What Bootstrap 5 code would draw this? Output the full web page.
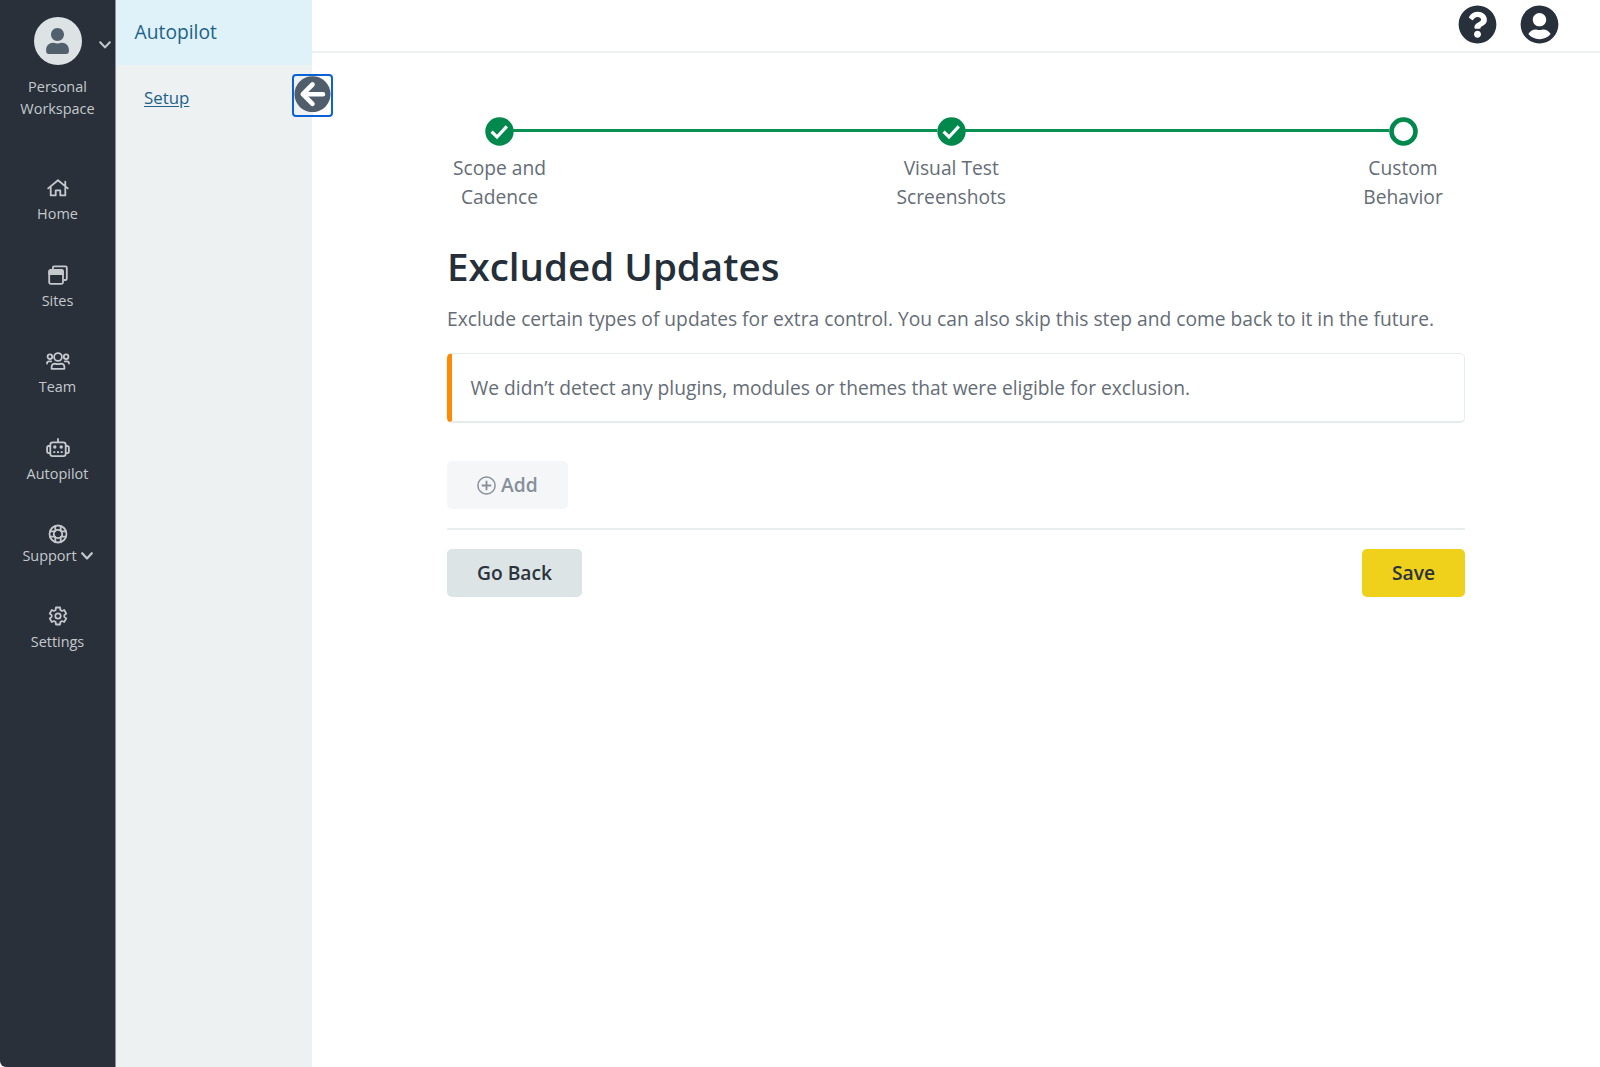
<!DOCTYPE html>
<html lang="en">
<head>
<meta charset="utf-8">
<meta name="viewport" content="width=device-width, initial-scale=1">
<title>Autopilot Setup</title>
<link href="https://cdn.jsdelivr.net/npm/bootstrap@5.3.0/dist/css/bootstrap.min.css" rel="stylesheet">
<style>
  body { font-family: "Open Sans", "Noto Sans", sans-serif; font-size: 19.23px; line-height: 28.9px; color: #656d76; background: #fff; overflow: hidden; }
  .side-nav { width: 116px; background: #29303a; border-right: 1px solid #8b9197; border-bottom-left-radius: 6px; color: #c5c9cd; font-size: 14.45px; line-height: 20px; }
  .side-nav a { color: inherit; }
  .workspace { height: 178px; padding-top: 17.4px; line-height: 21.4px; }
  .avatar { width: 48px; height: 48px; background: #dde3e5; color: #525f6d; }
  .workspace-caret { right: 4px; top: 41px; }
  .workspace-name { margin-top: 11px; }
  .side-item { height: 86.6px; gap: 6.2px; }
  .side-item.tight { height: 81.6px; gap: 1.5px; }
  .ico { fill: none; stroke: currentColor; stroke-width: 1.8; stroke-linecap: round; stroke-linejoin: round; }
  .sub-nav { width: 196px; background: #edf1f2; }
  .sub-nav a { color: #1c6187; }
  .sub-title { height: 65px; padding: 3px 19px 4px 18.6px; background: #dff2f9; }
  .sub-link { margin: 19px 0 0 28px; font-size: 16.86px; text-underline-offset: 2px; }
  .collapse-btn { top: 74px; right: -21px; width: 41px; height: 43px; border: 2px solid #0b61d6; border-radius: 4px; background: linear-gradient(90deg, #edf1f2 50%, #fff 50%); z-index: 2; }
  .top-bar { height: 53px; border-bottom: 2px solid #edf1f3; padding: 0 41px 2px 0; gap: 23.5px; color: #28313b; }
  .page-body { margin-left: 135px; width: 1018px; padding-top: 64px; }
  .steps { padding-right: 9.5px; }
  .step { width: 105px; }
  .step + .step::before { content: ""; position: absolute; height: 3px; top: 12px; right: calc(50% + 14px); width: 424px; background: #0b9053; }
  .step-label { margin-top: 8px; }
  h1 { font-size: 38.54px; font-weight: 600; line-height: 48px; color: #252f39; margin: 30px 0 15px; }
  .notice { border: 1px solid #e6ecee; border-bottom-width: 2px; border-left: 5px solid #ff8a00; border-radius: 5px; height: 70px; padding: 2px 19px 0 18.5px; margin-top: 19px; }
  .btn { font-size: 19.23px; font-weight: 600; line-height: 28.9px; border: 0; border-radius: 5px; height: 48px; padding: 2px 30px 0; }
  .btn-add, .btn-add:disabled { background: #f4f6f8; color: #87909a; opacity: 1; margin-top: 38px; gap: 5px; }
  .btn-back { background: #dce4e5; color: #2b333c; }
  .btn-save { background: #efd11c; color: #2b333c; }
  .rule { height: 2px; background: #e8edef; margin: 19px 0; }
</style>
<script src="https://cdn.jsdelivr.net/npm/bootstrap@5.3.0/dist/js/bootstrap.bundle.min.js"></script>
</head>
<body>
<div class="d-flex vh-100">
  <nav class="side-nav flex-shrink-0 text-center">
    <div class="workspace position-relative d-flex flex-column align-items-center">
      <div class="avatar rounded-circle d-flex align-items-center justify-content-center">
        <svg width="23" height="26" viewBox="0 0 448 512" fill="currentColor"><path d="M224 256c70.7 0 128-57.3 128-128S294.7 0 224 0 96 57.3 96 128s57.3 128 128 128zm89.6 32h-16.7c-22.2 10.2-46.9 16-72.9 16s-50.6-5.8-72.9-16h-16.7C60.2 288 0 348.2 0 422.4V464c0 26.5 21.5 48 48 48h352c26.5 0 48-21.5 48-48v-41.6c0-74.2-60.2-134.4-134.4-134.4z"/></svg>
      </div>
      <svg class="ico workspace-caret position-absolute d-block" width="12" height="8" viewBox="0 0 12 8"><path stroke-width="2" d="M1.2 1.2 6 6.4l4.8-5.2"/></svg>
      <div class="workspace-name">Personal<br>Workspace</div>
    </div>
    <a href="#" class="side-item d-flex flex-column align-items-center text-decoration-none">
      <svg class="ico flex-shrink-0" width="22" height="20" viewBox="0 0 22 20"><path d="M1.2 10.4 11 2.2l9.8 8.2M3.7 9v8.4h5v-5.1h4.6v5.1h5V9M18.3 8V3.7"/></svg>
      <span>Home</span>
    </a>
    <a href="#" class="side-item d-flex flex-column align-items-center text-decoration-none">
      <svg class="ico flex-shrink-0" width="20" height="20" viewBox="0 0 20 20"><rect x="1.2" y="5" width="13.8" height="13.8" rx="1.5"/><path fill="currentColor" d="M1.2 9V6.3L2.3 5h11.5L15 6.3V9z"/><path d="M4.9 4V2.4q0-1.1 1.1-1.1h11.6q1.2 0 1.2 1.1v11.4q0 1.2-1.2 1.2h-1"/></svg>
      <span>Sites</span>
    </a>
    <a href="#" class="side-item d-flex flex-column align-items-center text-decoration-none">
      <svg class="ico flex-shrink-0" width="24" height="20" viewBox="0 0 24 20"><circle cx="12" cy="6" r="3.9"/><circle cx="3.9" cy="5.7" r="2.3"/><circle cx="20.1" cy="5.7" r="2.3"/><path d="M5.6 17.8v-1.6q0-3.5 3.3-3.6 3.1 1 6.2 0 3.3.1 3.3 3.6v1.6zM1 12.6q0-2.2 2-2.2h2.2M23 12.6q0-2.2-2-2.2h-2.2"/></svg>
      <span>Team</span>
    </a>
    <a href="#" class="side-item d-flex flex-column align-items-center text-decoration-none">
      <svg class="ico flex-shrink-0" width="24" height="20" viewBox="0 0 24 20"><rect x="4.3" y="4.4" width="15.4" height="13.8" rx="2.4"/><path d="M12 .9v3.3M4 8H2.6Q1.1 8 1.1 9.6v4q0 1.6 1.5 1.6H4M20 8h1.4q1.5 0 1.5 1.6v4q0 1.6-1.5 1.6H20"/><g fill="currentColor" stroke="none"><circle cx="8.8" cy="9" r="1.7"/><circle cx="15.2" cy="9" r="1.7"/><path d="M7.3 13.3h2v1.8h-2zM11 13.3h2v1.8h-2zM14.7 13.3h2v1.8h-2z"/></g></svg>
      <span>Autopilot</span>
    </a>
    <a href="#" class="side-item tight d-flex flex-column align-items-center text-decoration-none">
      <svg class="ico flex-shrink-0" width="20" height="20" viewBox="0 0 20 20"><circle cx="10" cy="10" r="8.5"/><circle cx="10" cy="10" r="4.2"/><path d="M7.3 2v5M12.7 2v5M7.3 13v5M12.7 13v5M2 7.3h5M2 12.7h5M13 7.3h5M13 12.7h5"/></svg>
      <span class="d-flex align-items-center justify-content-center gap-1">Support
        <svg class="ico" width="12" height="8" viewBox="0 0 12 8"><path stroke-width="2.2" d="M1.2 1.2 6 6.4l4.8-5.2"/></svg>
      </span>
    </a>
    <a href="#" class="side-item d-flex flex-column align-items-center text-decoration-none">
      <svg class="ico flex-shrink-0" width="20" height="20" viewBox="-10 -10 20 20"><path d="M-2.4-5.93-2.08-8.5H2.08L2.4-5.93 3.94-5.04 6.18-5.97 8.26-2.37 6.34-.89V.89L8.26 2.37 6.18 5.97 3.94 5.04 2.4 5.93 2.08 8.5H-2.08L-2.4 5.93-3.94 5.04-6.18 5.97-8.26 2.37-6.34.89V-.89L-8.26-2.37-6.18-5.97-3.94-5.04z"/><circle r="2.7"/></svg>
      <span>Settings</span>
    </a>
  </nav>

  <aside class="sub-nav position-relative flex-shrink-0">
    <div class="sub-title d-flex align-items-center"><a href="#" class="text-decoration-none">Autopilot</a></div>
    <div class="sub-link"><a href="#">Setup</a></div>
    <button class="collapse-btn position-absolute p-0 d-flex align-items-center justify-content-center" aria-label="Collapse menu">
      <svg class="flex-shrink-0 mb-1" width="37" height="37" viewBox="0 0 37 37"><circle cx="18.5" cy="19.2" r="18" fill="#505d6a"/><path d="M29 19.2H9.5M18.5 9.5 8.8 19.2l9.7 9.7" fill="none" stroke="#fff" stroke-width="4.6" stroke-linecap="round" stroke-linejoin="round"/></svg>
    </button>
  </aside>

  <div class="flex-grow-1">
    <header class="top-bar d-flex justify-content-end align-items-center">
      <svg width="39" height="39" viewBox="0 0 512 512" fill="currentColor"><path d="M504 256c0 136.997-111.043 248-248 248S8 392.997 8 256C8 119.083 119.043 8 256 8s248 111.083 248 248zM262.655 90c-54.497 0-89.255 22.957-116.549 63.758-3.536 5.286-2.353 12.415 2.715 16.258l34.699 26.31c5.205 3.947 12.621 3.008 16.665-2.122 17.864-22.658 30.113-35.797 57.303-35.797 20.429 0 45.698 13.148 45.698 32.958 0 14.976-12.363 22.667-32.534 33.976C247.128 238.528 216 254.941 216 296v4c0 6.627 5.373 12 12 12h56c6.627 0 12-5.373 12-12v-1.333c0-28.462 83.186-29.647 83.186-106.667 0-58.002-60.165-102-116.531-102zM256 338c-25.365 0-46 20.635-46 46 0 25.364 20.635 46 46 46s46-20.636 46-46c0-25.365-20.635-46-46-46z"/></svg>
      <svg width="39" height="39" viewBox="-8 0 512 512" fill="currentColor"><path d="M248 8C111 8 0 119 0 256s111 248 248 248 248-111 248-248S385 8 248 8zm0 96c48.6 0 88 39.4 88 88s-39.4 88-88 88-88-39.4-88-88 39.4-88 88-88zm0 344c-58.7 0-111.3-26.6-146.5-68.2 18.8-35.4 55.6-59.8 98.5-59.8 2.4 0 4.8.4 7.1 1.1 13 4.2 26.6 6.9 40.9 6.9 14.3 0 28-2.7 40.9-6.9 2.3-.7 4.7-1.1 7.1-1.1 42.9 0 79.7 24.4 98.5 59.8C359.3 421.4 306.7 448 248 448z"/></svg>
    </header>

    <main class="page-body">
      <div class="steps d-flex justify-content-between text-center">
        <div class="step position-relative d-flex flex-column align-items-center">
          <svg width="29" height="29" viewBox="0 0 29 29"><circle cx="14.5" cy="14.5" r="14.2" fill="#00884d"/><path d="m6.6 14.6 5.4 5.4 9.8-10.6" fill="none" stroke="#fff" stroke-width="3.2"/></svg>
          <div class="step-label">Scope and<br>Cadence</div>
        </div>
        <div class="step position-relative d-flex flex-column align-items-center">
          <svg width="29" height="29" viewBox="0 0 29 29"><circle cx="14.5" cy="14.5" r="14.2" fill="#00884d"/><path d="m6.6 14.6 5.4 5.4 9.8-10.6" fill="none" stroke="#fff" stroke-width="3.2"/></svg>
          <div class="step-label">Visual Test<br>Screenshots</div>
        </div>
        <div class="step position-relative d-flex flex-column align-items-center">
          <svg width="29" height="29" viewBox="0 0 29 29"><circle cx="14.5" cy="14.5" r="12" fill="#fff" stroke="#00884d" stroke-width="4.6"/></svg>
          <div class="step-label">Custom<br>Behavior</div>
        </div>
      </div>

      <h1>Excluded Updates</h1>
      <p class="mb-0">Exclude certain types of updates for extra control. You can also skip this step and come back to it in the future.</p>
      <div class="notice d-flex align-items-center">We didn’t detect any plugins, modules or themes that were eligible for exclusion.</div>

      <button class="btn btn-add d-flex align-items-center" disabled>
        <svg width="19" height="19" viewBox="0 0 19 19" fill="none" stroke="currentColor" stroke-width="1.5"><circle cx="9.5" cy="9.5" r="8.6"/><path d="M9.5 4.7v9.6M4.7 9.5h9.6" stroke-width="1.8"/></svg>
        Add
      </button>
      <div class="rule"></div>
      <div class="d-flex justify-content-between">
        <button class="btn btn-back">Go Back</button>
        <button class="btn btn-save">Save</button>
      </div>
    </main>
  </div>
</div>
</body>
</html>
